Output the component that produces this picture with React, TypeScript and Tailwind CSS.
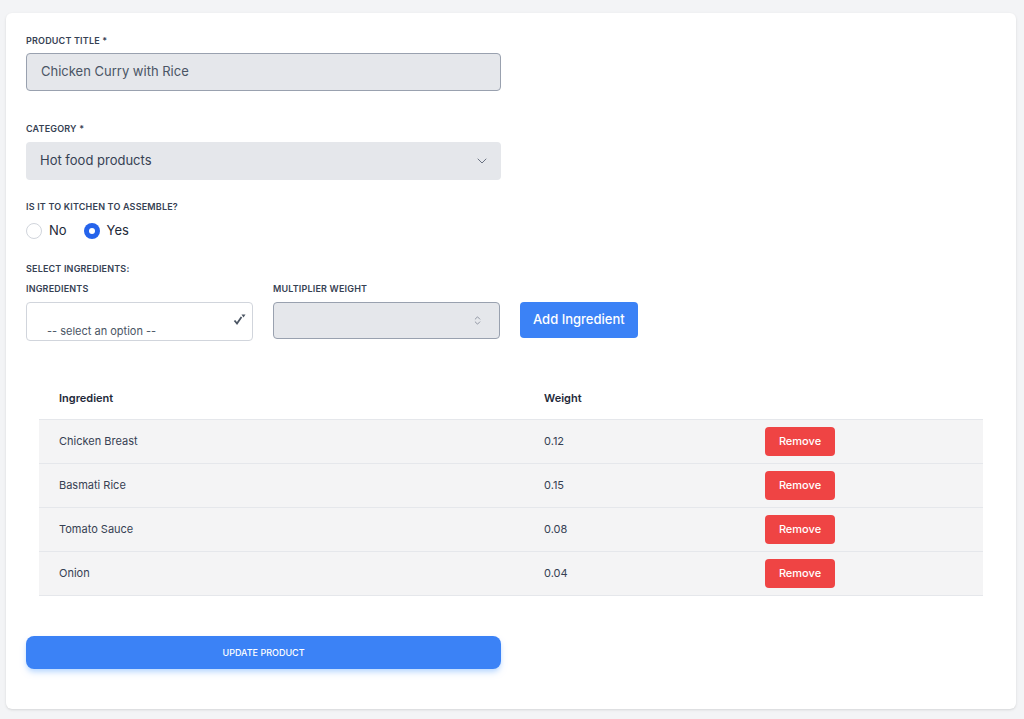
import { ChevronDown, ChevronsUpDown } from "lucide-react";

const ingredients = [
  { name: "Chicken Breast", weight: "0.12" },
  { name: "Basmati Rice", weight: "0.15" },
  { name: "Tomato Sauce", weight: "0.08" },
  { name: "Onion", weight: "0.04" },
];

function Label({ children }: { children: React.ReactNode }) {
  return (
    <div className="text-[9px] font-semibold uppercase tracking-[0.02em] text-gray-700 leading-none">
      {children}
    </div>
  );
}

function Radio({ checked, label }: { checked?: boolean; label: string }) {
  return (
    <label className="flex items-center gap-[7px]">
      {checked ? (
        <span className="w-4 h-4 rounded-full bg-[#2563eb] flex items-center justify-center">
          <span className="w-[6px] h-[6px] rounded-full bg-white" />
        </span>
      ) : (
        <span className="w-4 h-4 rounded-full border border-gray-300 bg-white" />
      )}
      <span className="text-[13px] text-gray-800">{label}</span>
    </label>
  );
}

export default function App() {
  return (
    <div
      className="min-h-[719px] bg-gray-100 px-[6px] pt-[13px] pb-[10px]"
      style={{ fontFamily: "Inter, 'Noto Sans', sans-serif" }}
    >
      <div className="bg-white rounded-md shadow-sm px-5 pt-[23px] pb-[40px] w-[1010px]">
        {/* Product title */}
        <Label>Product Title *</Label>
        <div className="mt-[8px] w-[475px] h-[38px] bg-gray-200 border border-gray-400 rounded flex items-center px-[14px] text-[13px] text-gray-600">
          Chicken Curry with Rice
        </div>

        {/* Category */}
        <div className="mt-[33px]">
          <Label>Category *</Label>
        </div>
        <div className="mt-[9px] w-[475px] h-[38px] bg-gray-200 rounded flex items-center justify-between pl-[14px] pr-[11px] text-[13px] text-gray-700">
          Hot food products
          <ChevronDown className="w-4 h-4 text-gray-500" strokeWidth={1.5} />
        </div>

        {/* Kitchen assembly */}
        <div className="mt-[22px]">
          <Label>Is it to kitchen to assemble?</Label>
        </div>
        <div className="mt-[10px] flex items-center gap-[17px]">
          <Radio label="No" />
          <Radio checked label="Yes" />
        </div>

        {/* Ingredient picker */}
        <div className="mt-[23px]">
          <Label>Select Ingredients:</Label>
        </div>
        <div className="mt-[11px] flex items-end gap-5">
          <div className="w-[227px]">
            <Label>Ingredients</Label>
            <div className="mt-[9px] h-[39px] bg-white border border-gray-300 rounded flex items-end justify-between pl-5 pr-[6px] text-[11px] text-gray-600">
              <span>-- select an option --</span>
              <svg width="13" height="12" viewBox="0 0 13 12" className="mb-[14px]">
                <path d="M1.5 6.5 L4 9.5 L8.5 3" fill="none" stroke="#4b5563" strokeWidth="1.8" />
                <path d="M8.5 0.5 L12.5 0.5 L10.5 3.5 Z" fill="#4b5563" />
              </svg>
            </div>
          </div>
          <div className="w-[227px]">
            <Label>Multiplier Weight</Label>
            <div className="mt-[9px] h-[37px] mb-[2px] bg-gray-200 border border-gray-400 rounded flex items-center justify-end pr-[16px]">
              <ChevronsUpDown className="w-[11px] h-[11px] text-gray-500" strokeWidth={1.5} />
            </div>
          </div>
          <button className="h-[36px] mb-[3px] px-[13px] bg-[#3b82f6] text-white text-[13px] font-medium rounded">
            Add Ingredient
          </button>
        </div>

        {/* Ingredient table */}
        <table className="mt-[36px] mx-[13px] w-[944px] text-left border-collapse">
          <thead>
            <tr className="h-[43px]">
              <th className="w-[485px] pl-5 text-[11px] font-semibold text-gray-800">Ingredient</th>
              <th className="w-[221px] pl-5 text-[11px] font-semibold text-gray-800">Weight</th>
              <th />
            </tr>
          </thead>
          <tbody>
            {ingredients.map((item) => (
              <tr key={item.name} className="h-[44px] bg-[#f4f4f5] border-t border-gray-200 last:border-b">
                <td className="pl-5 text-[11px] text-gray-700">{item.name}</td>
                <td className="pl-5 text-[11px] text-gray-700">{item.weight}</td>
                <td className="pl-5">
                  <button className="w-[70px] h-[29px] bg-[#ef4444] text-white text-[11px] font-medium rounded">
                    Remove
                  </button>
                </td>
              </tr>
            ))}
          </tbody>
        </table>

        <button className="mt-[40px] w-[475px] h-[33px] bg-[#3b82f6] text-white text-[9px] font-medium uppercase rounded-lg shadow-md shadow-blue-200">
          Update Product
        </button>
      </div>
    </div>
  );
}
